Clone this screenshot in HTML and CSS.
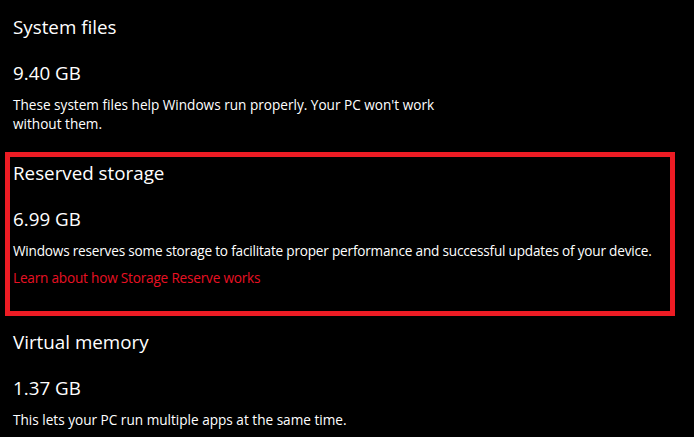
FILE: index.html
```html
<!DOCTYPE html>
<html lang="en">
<head>
    <meta charset="UTF-8">
    <meta name="viewport" content="width=device-width, initial-scale=1.0">
    <title>Storage usage</title>
    <link rel="stylesheet" href="styles.css">
</head>
<body>

<div class="section first">
    <h2 class="title">System files</h2>
    <p class="size">9.40 GB</p>
    <p class="desc narrow">These system files help Windows run properly. Your PC won't work without them.</p>
</div>

<div class="section highlight">
    <h2 class="title">Reserved storage</h2>
    <p class="size">6.99 GB</p>
    <p class="desc single">Windows reserves some storage to facilitate proper performance and successful updates of your device.</p>
    <a class="link" href="#">Learn about how Storage Reserve works</a>
</div>

<div class="section last">
    <h2 class="title">Virtual memory</h2>
    <p class="size">1.37 GB</p>
    <p class="desc">This lets your PC run multiple apps at the same time.</p>
</div>

</body>
</html>
```

FILE: styles.css
```css
body {
    font-family: "Open Sans", "Noto Sans", sans-serif;
    margin: 0;
    padding: 0;
    background-color: #000;
    color: #fff;
}

.section {
    padding-left: 13px;
}

.section.first {
    padding-top: 15px;
}

.section.highlight {
    margin: 19px 19px 0 5px;
    padding: 4px 0 24px 3px;
    border: 5px solid #ed1c24; /* red outline */
}

.section.last {
    padding-top: 14px;
}

.title {
    margin: 0;
    font-size: 18.8px;
    font-weight: normal;
    line-height: 24px;
}

.size {
    margin: 22px 0 0;
    font-size: 18.8px;
    line-height: 24px;
}

.desc {
    margin: 10px 0 0;
    font-size: 13.6px;
    line-height: 19px;
}

.desc.narrow {
    max-width: 450px;
}

.desc.single {
    white-space: nowrap;
    letter-spacing: -0.2px;
}

.link {
    display: block;
    margin-top: 8px;
    font-size: 13.6px;
    line-height: 19px;
    letter-spacing: -0.2px;
    color: #e81123;
    text-decoration: none;
}
```
